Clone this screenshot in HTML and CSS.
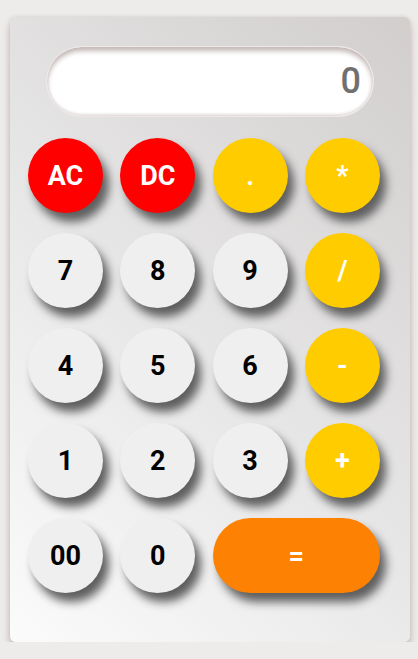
FILE: index.html
```html
<!DOCTYPE html>
<html>
<head>
<meta charset="utf-8">
<link rel="stylesheet" href="styles.css">
</head>
<body>
<div class="calc">
  <div class="display">0</div>
  <div class="keys">
    <button class="key red">AC</button>
    <button class="key red">DC</button>
    <button class="key yellow">.</button>
    <button class="key yellow">*</button>
    <button class="key">7</button>
    <button class="key">8</button>
    <button class="key">9</button>
    <button class="key yellow">/</button>
    <button class="key">4</button>
    <button class="key">5</button>
    <button class="key">6</button>
    <button class="key yellow">-</button>
    <button class="key">1</button>
    <button class="key">2</button>
    <button class="key">3</button>
    <button class="key yellow">+</button>
    <button class="key">00</button>
    <button class="key">0</button>
    <button class="key orange wide">=</button>
  </div>
</div>
</body>
</html>
```
FILE: styles.css
```css
html, body {
  margin: 0;
  padding: 0;
}
body {
  background: #eeecea;
  padding: 17px 8px 0 10px;
  font-family: Roboto, "Liberation Sans", sans-serif;
}
.calc {
  width: 400px;
  height: 625px;
  box-sizing: border-box;
  padding: 29px 30px 0 18px;
  border-radius: 6px;
  background: linear-gradient(225deg, #d1cecd 0%, #e6e5e5 50%, #fbfbfb 100%);
  box-shadow: 0 6px 8px #c4b8b6, 0 0 4px #d6cfcd;
}
.display {
  margin-left: 18px;
  width: 328px;
  height: 71px;
  box-sizing: border-box;
  border-radius: 36px;
  background: #fff;
  border: 1px solid #ece8e7;
  box-shadow: inset 0 4px 5px #c3b8b6, inset 0 -2px 3px #e4dedd;
  text-align: right;
  padding-right: 12px;
  font-size: 36px;
  font-weight: 500;
  line-height: 69px;
  color: #707070;
}
.keys {
  margin-top: 21px;
  display: grid;
  grid-template-columns: repeat(4, 75px);
  grid-auto-rows: 75px;
  column-gap: 17.3px;
  row-gap: 20px;
}
.key {
  border: none;
  border-radius: 38px;
  background: #efefef;
  color: #000;
  font-family: Roboto, "Liberation Sans", sans-serif;
  font-weight: bold;
  font-size: 27px;
  padding: 0;
  box-shadow: 6px 9px 10px #5e5e5e;
}
.red { background: #ff0000; color: #fff; }
.yellow { background: #ffcc00; color: #fff; }
.orange { background: #fd8204; color: #fff; }
.wide { grid-column: span 2; }
```
